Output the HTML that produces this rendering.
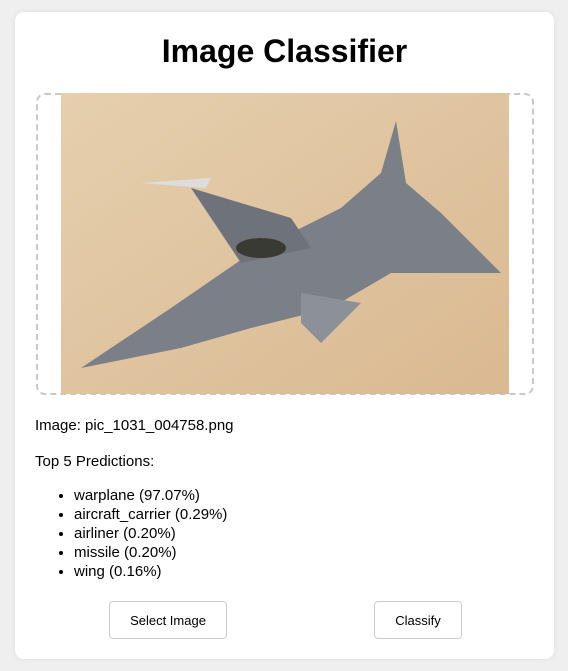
<!DOCTYPE html>
<html><head><style>
body{margin:0;background:#efefef;font-family:"Liberation Sans",Arial,sans-serif;width:568px;height:671px;overflow:hidden}
.card{position:absolute;left:15px;top:12px;width:539px;height:647px;background:#fff;border-radius:9px;box-shadow:0 0 6px rgba(0,0,0,.08)}
h1{position:absolute;left:0;right:0;top:21px;margin:0;text-align:center;font-size:32px;font-weight:bold;color:#000}
.drop{position:absolute;left:21px;top:81px;width:494px;height:298px;border:2px dashed #c8c8c8;border-radius:9px}
.img{position:absolute;left:46px;top:81px;width:448px;height:301px}
.t{position:absolute;left:20px;font-size:15px;color:#000}
ul{position:absolute;left:20px;top:474px;margin:0;padding-left:39px;font-size:15px;line-height:19px}
.btn{position:absolute;top:589px;height:36px;border:1px solid #ccc;border-radius:4px;background:#fff;font-size:13px;display:flex;align-items:center;justify-content:center}
</style></head><body>
<div class="card">
<h1>Image Classifier</h1>
<div class="drop"></div>
<svg class="img" viewBox="0 0 448 301">
<defs><linearGradient id="g" x1="0" y1="0" x2="1" y2="1"><stop offset="0" stop-color="#e6cfae"/><stop offset="1" stop-color="#d9b991"/></linearGradient></defs>
<rect width="448" height="301" fill="url(#g)"/>
<polygon points="20,275 110,215 190,160 280,115 320,80 335,28 345,90 380,120 440,180 330,180 270,215 190,235 120,255" fill="#7b7f87"/>
<polygon points="130,95 230,125 250,155 180,170" fill="#6e727a"/>
<polygon points="240,200 300,210 260,250 240,230" fill="#8c9098"/>
<ellipse cx="200" cy="155" rx="25" ry="10" fill="#3a3a34"/>
<polygon points="80,90 150,85 145,95" fill="#ddd"/>
</svg>
<div class="t" style="top:405px">Image: pic_1031_004758.png</div>
<div class="t" style="top:441px">Top 5 Predictions:</div>
<ul><li>warplane (97.07%)</li><li>aircraft_carrier (0.29%)</li><li>airliner (0.20%)</li><li>missile (0.20%)</li><li>wing (0.16%)</li></ul>
<div class="btn" style="left:94px;width:116px">Select Image</div>
<div class="btn" style="left:359px;width:86px">Classify</div>
</div>
</body></html>
